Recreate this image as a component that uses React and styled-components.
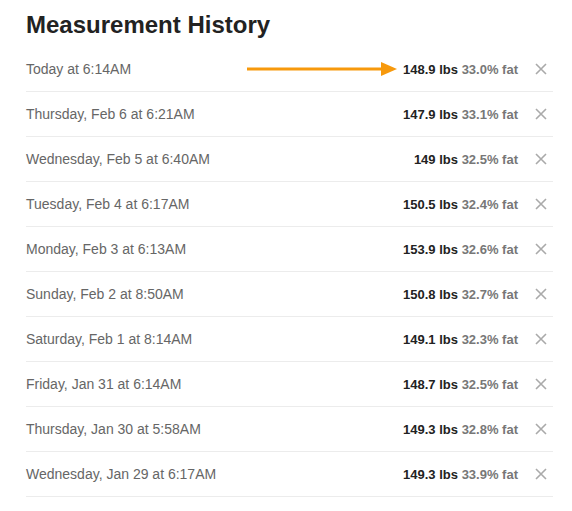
import React from 'react';
import styled, { createGlobalStyle } from 'styled-components';

const GlobalStyle = createGlobalStyle`
  html, body {
    margin: 0;
    padding: 0;
    background: #fff;
  }
  body {
    font-family: 'Liberation Sans', Arial, sans-serif;
  }
`;

const entries = [
  { date: 'Today at 6:14AM', weight: '148.9', fat: '33.0', highlight: true },
  { date: 'Thursday, Feb 6 at 6:21AM', weight: '147.9', fat: '33.1' },
  { date: 'Wednesday, Feb 5 at 6:40AM', weight: '149', fat: '32.5' },
  { date: 'Tuesday, Feb 4 at 6:17AM', weight: '150.5', fat: '32.4' },
  { date: 'Monday, Feb 3 at 6:13AM', weight: '153.9', fat: '32.6' },
  { date: 'Sunday, Feb 2 at 8:50AM', weight: '150.8', fat: '32.7' },
  { date: 'Saturday, Feb 1 at 8:14AM', weight: '149.1', fat: '32.3' },
  { date: 'Friday, Jan 31 at 6:14AM', weight: '148.7', fat: '32.5' },
  { date: 'Thursday, Jan 30 at 5:58AM', weight: '149.3', fat: '32.8' },
  { date: 'Wednesday, Jan 29 at 6:17AM', weight: '149.3', fat: '33.9' },
];

const Arrow = () => (
  <ArrowSvg width="152" height="16" viewBox="0 0 152 16">
    <line x1="0" y1="8" x2="136" y2="8" stroke="#f7990c" strokeWidth="3" />
    <polygon points="134,1 150,8 134,15" fill="#f7990c" />
  </ArrowSvg>
);

const DeleteIcon = () => (
  <svg width="12" height="12" viewBox="0 0 12 12">
    <path d="M1 1 L11 11 M11 1 L1 11" stroke="#aaa" strokeWidth="1.6" />
  </svg>
);

const App = () => {
  return (
    <>
      <GlobalStyle />
      <Wrapper>
        <Title>Measurement History</Title>
        <List>
          {entries.map((e) => (
            <Row key={e.date}>
              <DateText>{e.date}</DateText>
              {e.highlight && <Arrow />}
              <Values>
                <Weight>{e.weight} lbs</Weight> <Fat>{e.fat}% fat</Fat>
              </Values>
              <Remove>
                <DeleteIcon />
              </Remove>
            </Row>
          ))}
        </List>
      </Wrapper>
    </>
  );
};

export default App;

const Wrapper = styled.div`
  padding: 10px 19px 0 26px;
`;

const Title = styled.h1`
  margin: 0;
  font-size: 24px;
  font-weight: bold;
  color: #222;
  line-height: 30px;
  height: 37px;
`;

const List = styled.div`
  display: flex;
  flex-direction: column;
`;

const Row = styled.div`
  position: relative;
  display: flex;
  align-items: center;
  height: 44px;
  border-bottom: 1px solid #ececec;
`;

const DateText = styled.span`
  flex: 1;
  font-size: 14px;
  color: #666;
`;

const ArrowSvg = styled.svg`
  position: absolute;
  left: 221px;
  top: 14px;
`;

const Values = styled.span`
  font-size: 13px;
  font-weight: bold;
  white-space: pre;
`;

const Weight = styled.span`
  color: #222;
`;

const Fat = styled.span`
  color: #777;
`;

const Remove = styled.span`
  display: flex;
  align-items: center;
  justify-content: center;
  width: 12px;
  margin-left: 17px;
  margin-right: 6px;
  cursor: pointer;
`;
